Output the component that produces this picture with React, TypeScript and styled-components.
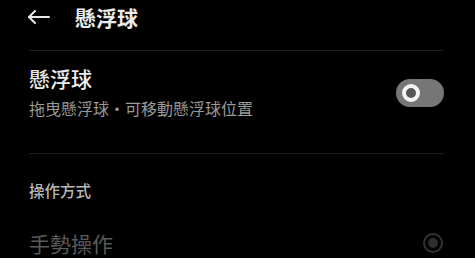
import styled, { createGlobalStyle } from 'styled-components';

const GlobalStyle = createGlobalStyle`
  html, body {
    margin: 0;
    padding: 0;
    background: #000;
  }
  body {
    font-family: "Noto Sans CJK TC", "Noto Sans", sans-serif;
    color: #e8e8e8;
  }
`;

const Page = styled.div`
  width: 475px;
  height: 258px;
  overflow: hidden;
  background: #000;
`;

const Header = styled.div`
  height: 34px;
  display: flex;
  align-items: center;
  padding-left: 27px;
  gap: 24px;
`;

const Title = styled.div`
  font-size: 21px;
  font-weight: 700;
  line-height: 26px;
  color: #ececec;
`;

const Divider = styled.div`
  height: 1px;
  background: #1c1c1c;
  margin: ${(p: { top: number }) => p.top}px 31px 0 29px;
`;

const Row = styled.div`
  display: flex;
  align-items: center;
  justify-content: space-between;
  padding: 14px 31px 34px 29px;
`;

const TextBlock = styled.div`
  display: flex;
  flex-direction: column;
  gap: 6px;
`;

const RowTitle = styled.div`
  font-size: 21px;
  font-weight: 500;
  line-height: 26px;
  color: #ececec;
`;

const RowSub = styled.div`
  font-size: 16px;
  line-height: 22px;
  color: #9a9a9a;
`;

const Track = styled.div`
  width: 48px;
  height: 28px;
  border-radius: 14px;
  background: #767676;
  display: flex;
  align-items: center;
  padding-left: 6px;
  box-sizing: border-box;
  margin-top: 2px;
`;

const Knob = styled.div`
  width: 18px;
  height: 18px;
  border-radius: 50%;
  box-sizing: border-box;
  border: 4px solid #f4f4f4;
  background: #575757;
`;

const SectionLabel = styled.div`
  padding: 26px 29px 0;
  font-size: 15.5px;
  font-weight: 500;
  line-height: 20px;
  color: #b8b8b8;
`;

const OptionRow = styled.div`
  display: flex;
  align-items: center;
  justify-content: space-between;
  padding: 29px 32px 0 29px;
`;

const OptionLabel = styled.div`
  font-size: 21px;
  line-height: 28px;
  color: #5a5a5a;
`;

const Radio = styled.div`
  width: 20px;
  height: 20px;
  border-radius: 50%;
  box-sizing: border-box;
  border: 2px solid #333;
  display: flex;
  align-items: center;
  justify-content: center;
  &::after {
    content: '';
    width: 10px;
    height: 10px;
    border-radius: 50%;
    background: #2e2e2e;
  }
`;

function BackArrow() {
  return (
    <svg width="24" height="24" viewBox="0 0 24 24" fill="none" stroke="#e8e8e8" strokeWidth="2" strokeLinecap="round" strokeLinejoin="round">
      <path d="M22 12H2" />
      <path d="M8 6l-6 6 6 6" />
    </svg>
  );
}

function App() {
  return (
    <Page>
      <GlobalStyle />
      <Header>
        <BackArrow />
        <Title>懸浮球</Title>
      </Header>
      <Divider top={16} />
      <Row>
        <TextBlock>
          <RowTitle>懸浮球</RowTitle>
          <RowSub>拖曳懸浮球・可移動懸浮球位置</RowSub>
        </TextBlock>
        <Track>
          <Knob />
        </Track>
      </Row>
      <Divider top={0} />
      <SectionLabel>操作方式</SectionLabel>
      <OptionRow>
        <OptionLabel>手勢操作</OptionLabel>
        <Radio />
      </OptionRow>
    </Page>
  );
}

export default App;
